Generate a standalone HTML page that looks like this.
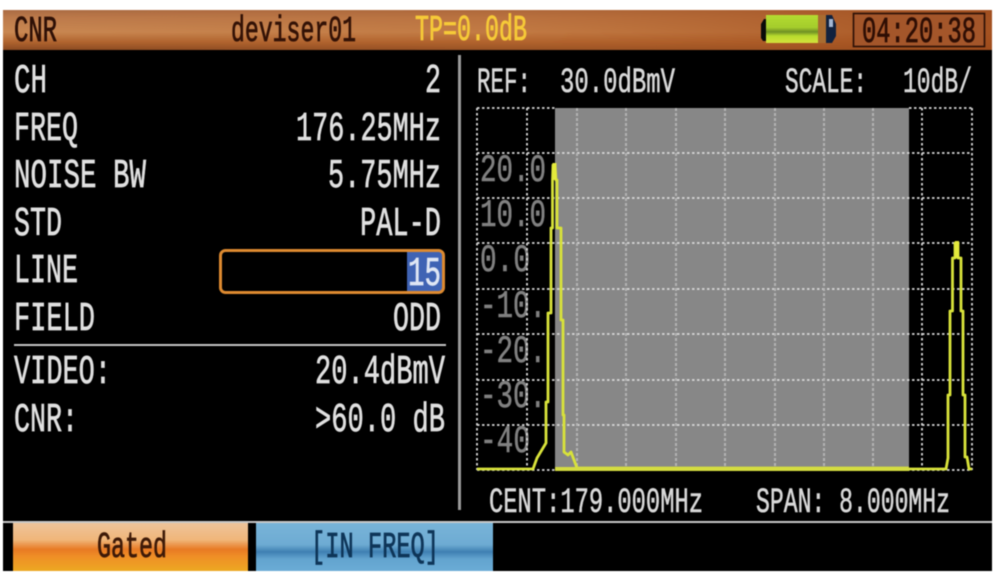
<!DOCTYPE html>
<html lang="en">
<head>
<meta charset="utf-8">
<title>CNR</title>
<style>
html,body{margin:0;padding:0;background:#fff;width:1000px;height:577px;overflow:hidden}
svg{display:block;position:absolute;left:0;top:0;filter:blur(.6px)}
text{font-family:"Liberation Mono","DejaVu Sans Mono",monospace;}
.m{font-size:41px;fill:#e0e0e0;stroke:#e0e0e0;stroke-width:.7px}
.s{font-size:35px;fill:#d8d8d8;stroke:#d8d8d8;stroke-width:.6px}
.l{font-size:39px;fill:#808080;stroke:#808080;stroke-width:.6px}
.h{font-size:36px;stroke-width:.8px}
</style>
</head>
<body>
<svg width="1000" height="577" viewBox="0 0 1000 577" xmlns="http://www.w3.org/2000/svg">
<defs>
<linearGradient id="hd" x1="0" y1="0" x2="0" y2="1">
<stop offset="0" stop-color="#ab6c44"/><stop offset=".2" stop-color="#bd7b4c"/><stop offset=".55" stop-color="#c98852"/><stop offset=".8" stop-color="#b0642f"/><stop offset="1" stop-color="#8a4a22"/>
</linearGradient>
<linearGradient id="hd2" x1="0" y1="0" x2="1" y2="0">
<stop offset="0" stop-color="#b5622a" stop-opacity="0"/><stop offset=".5" stop-color="#b5622a" stop-opacity=".35"/><stop offset="1" stop-color="#a04c1c" stop-opacity=".9"/>
</linearGradient>
<linearGradient id="org" x1="0" y1="0" x2="0" y2="1">
<stop offset="0" stop-color="#eec49a"/><stop offset=".35" stop-color="#f0b67a"/><stop offset=".55" stop-color="#e87a24"/><stop offset=".7" stop-color="#ef8f26"/><stop offset="1" stop-color="#eda822"/>
</linearGradient>
<linearGradient id="blu" x1="0" y1="0" x2="0" y2="1">
<stop offset="0" stop-color="#78b4d8"/><stop offset=".45" stop-color="#6eabd3"/><stop offset=".6" stop-color="#3f80b2"/><stop offset=".75" stop-color="#63a4cf"/><stop offset="1" stop-color="#6bacd6"/>
</linearGradient>
<linearGradient id="bat" x1="0" y1="0" x2="0" y2="1">
<stop offset="0" stop-color="#b4dc30"/><stop offset=".45" stop-color="#a4cc2c"/><stop offset=".6" stop-color="#6f9024"/><stop offset=".75" stop-color="#b8dc2e"/><stop offset="1" stop-color="#d4e23c"/>
</linearGradient>
</defs>

<rect x="3" y="10" width="989" height="561" fill="#000"/>

<!-- header -->
<rect x="3" y="10" width="989" height="40" fill="url(#hd)"/>
<rect x="3" y="10" width="989" height="40" fill="url(#hd2)"/>
<text class="h" x="14" y="41" fill="#2e1006" stroke="#2e1006" textLength="43" lengthAdjust="spacingAndGlyphs">CNR</text>
<text class="h" x="231" y="41" fill="#331206" stroke="#331206" textLength="125" lengthAdjust="spacingAndGlyphs">deviser01</text>
<text class="h" x="415" y="40" fill="#f6ca38" stroke="#f6ca38" textLength="112" lengthAdjust="spacingAndGlyphs">TP=0.0dB</text>

<!-- battery -->
<path d="M761 24L764 19H768V41H763L761 38Z" fill="#0a0a0a"/>
<path d="M766 15H818V43H766Z" fill="url(#bat)"/>
<rect x="818" y="15" width="8" height="28" fill="#a86c30"/>
<path d="M826 15H832L836 24V36L832 43H826Z" fill="#12223e"/>
<rect x="829" y="19" width="4" height="8" fill="#a4b8d4"/>

<!-- clock -->
<rect x="853.5" y="13.5" width="131" height="33" fill="#a4562a" stroke="#2a0f06" stroke-width="1.6"/>
<text class="h" x="862" y="42" fill="#2e0e04" stroke="#2e0e04" textLength="114" lengthAdjust="spacingAndGlyphs">04:20:38</text>

<!-- left column -->
<text class="m" x="14" y="92" textLength="33" lengthAdjust="spacingAndGlyphs">CH</text>
<text class="m" x="14" y="140" textLength="64" lengthAdjust="spacingAndGlyphs">FREQ</text>
<text class="m" x="14" y="187" textLength="132" lengthAdjust="spacingAndGlyphs">NOISE BW</text>
<text class="m" x="14" y="235" textLength="48" lengthAdjust="spacingAndGlyphs">STD</text>
<text class="m" x="14" y="282" textLength="64" lengthAdjust="spacingAndGlyphs">LINE</text>
<text class="m" x="14" y="330" textLength="81" lengthAdjust="spacingAndGlyphs">FIELD</text>
<text class="m" x="14" y="383" textLength="97" lengthAdjust="spacingAndGlyphs">VIDEO:</text>
<text class="m" x="14" y="431" textLength="64" lengthAdjust="spacingAndGlyphs">CNR:</text>
<text class="m" x="425" y="92" textLength="16" lengthAdjust="spacingAndGlyphs">2</text>
<text class="m" x="296" y="140" textLength="145" lengthAdjust="spacingAndGlyphs">176.25MHz</text>
<text class="m" x="328" y="187" textLength="113" lengthAdjust="spacingAndGlyphs">5.75MHz</text>
<text class="m" x="360" y="235" textLength="81" lengthAdjust="spacingAndGlyphs">PAL-D</text>
<text class="m" x="393" y="330" textLength="48" lengthAdjust="spacingAndGlyphs">ODD</text>
<text class="m" x="315" y="383" textLength="130" lengthAdjust="spacingAndGlyphs">20.4dBmV</text>
<text class="m" x="315" y="431" textLength="130" lengthAdjust="spacingAndGlyphs">&gt;60.0 dB</text>

<!-- LINE input -->
<rect x="407" y="252" width="36" height="40" fill="#3f63b4"/>
<rect x="220.5" y="250.5" width="223" height="42" rx="5" fill="none" stroke="#dd8a30" stroke-width="3"/>
<text class="m" x="408" y="285" style="fill:#dfe6f4;stroke:#dfe6f4" textLength="33" lengthAdjust="spacingAndGlyphs">15</text>

<rect x="14" y="344" width="432" height="2" fill="#c4c4c4"/>
<rect x="458" y="55" width="3" height="455" fill="#9a9a9a"/>

<!-- chart head -->
<text class="s" x="477" y="92" textLength="54" lengthAdjust="spacingAndGlyphs">REF:</text>
<text class="s" x="560" y="92" textLength="115" lengthAdjust="spacingAndGlyphs">30.0dBmV</text>
<text class="s" x="785" y="92" textLength="82" lengthAdjust="spacingAndGlyphs">SCALE:</text>
<text class="s" x="903" y="92" textLength="69" lengthAdjust="spacingAndGlyphs">10dB/</text>

<!-- axis labels -->
<text class="l" x="480" y="181" textLength="66" lengthAdjust="spacingAndGlyphs">20.0</text>
<text class="l" x="480" y="226" textLength="66" lengthAdjust="spacingAndGlyphs">10.0</text>
<text class="l" x="480" y="271" textLength="50" lengthAdjust="spacingAndGlyphs">0.0</text>
<text class="l" x="480" y="317" textLength="66" lengthAdjust="spacingAndGlyphs">-10.</text>
<text class="l" x="480" y="362" textLength="66" lengthAdjust="spacingAndGlyphs">-20.</text>
<text class="l" x="480" y="407" textLength="66" lengthAdjust="spacingAndGlyphs">-30.</text>
<text class="l" x="480" y="452" textLength="50" lengthAdjust="spacingAndGlyphs">-40</text>

<!-- plot -->
<rect x="555" y="108" width="354" height="362" fill="#878787"/>
<g stroke="#d8d8d8" stroke-width="1.8" stroke-dasharray="2.5 2.5" fill="none">
<path d="M477 108V470M527 108V470M922 108V470M972 108V470"/>
<path d="M477 108H555M909 108H972M477 153H972M477 198H972M477 243H972M477 289H972M477 334H972M477 380H972M477 425H972M477 470H972"/>
</g>
<g stroke="#b4b4b4" stroke-width="2" stroke-dasharray="3 2" fill="none">
<path d="M577 108V470M626 108V470M676 108V470M725 108V470M775 108V470M824 108V470M873 108V470"/>
</g>

<!-- trace -->
<g fill="none" stroke="#d8e23a" stroke-width="2.8" stroke-linejoin="round">
<path d="M477 469H533L537 458L540 453L543 448L546 443V402H548V313H551V228H552.5V180L553 165H555L556 180H557V228H561V320H563V415H564V452L568 455L571 452L574 460L577 468H909"/>
<path d="M909 469H946L948 458V395H950V311H952.5V258H955V243H958V258H961V311H963V395H965V457H967L969 469H972"/>
</g>
<rect x="552.5" y="163" width="4" height="17" fill="#e4ea3c"/>
<rect x="955" y="241" width="4" height="17" fill="#e4ea3c"/>
<rect x="555" y="467" width="354" height="4" fill="#d4dc40"/>

<!-- chart foot -->
<text class="s" x="489" y="512" textLength="214" lengthAdjust="spacingAndGlyphs">CENT:179.000MHz</text>
<text class="s" x="756" y="512" textLength="194" lengthAdjust="spacingAndGlyphs">SPAN: 8.000MHz</text>

<!-- softkeys -->
<rect x="3" y="521" width="989" height="2" fill="#c8c8c8"/>
<rect x="13" y="523" width="235" height="48" fill="url(#org)"/>
<rect x="256" y="523" width="237" height="48" fill="url(#blu)"/>
<text class="h" x="97" y="557" fill="#3e1a08" stroke="#3e1a08" textLength="70" lengthAdjust="spacingAndGlyphs">Gated</text>
<text class="h" x="311" y="557" fill="#0e3558" stroke="#0e3558" textLength="128" lengthAdjust="spacingAndGlyphs">[IN FREQ]</text>

<!-- outer white edges -->
<rect x="0" y="0" width="1000" height="10" fill="#fff"/>
<rect x="0" y="571" width="1000" height="6" fill="#fff"/>
<rect x="0" y="0" width="3" height="577" fill="#fff"/>
<rect x="992" y="0" width="8" height="577" fill="#fff"/>
</svg>
</body>
</html>
